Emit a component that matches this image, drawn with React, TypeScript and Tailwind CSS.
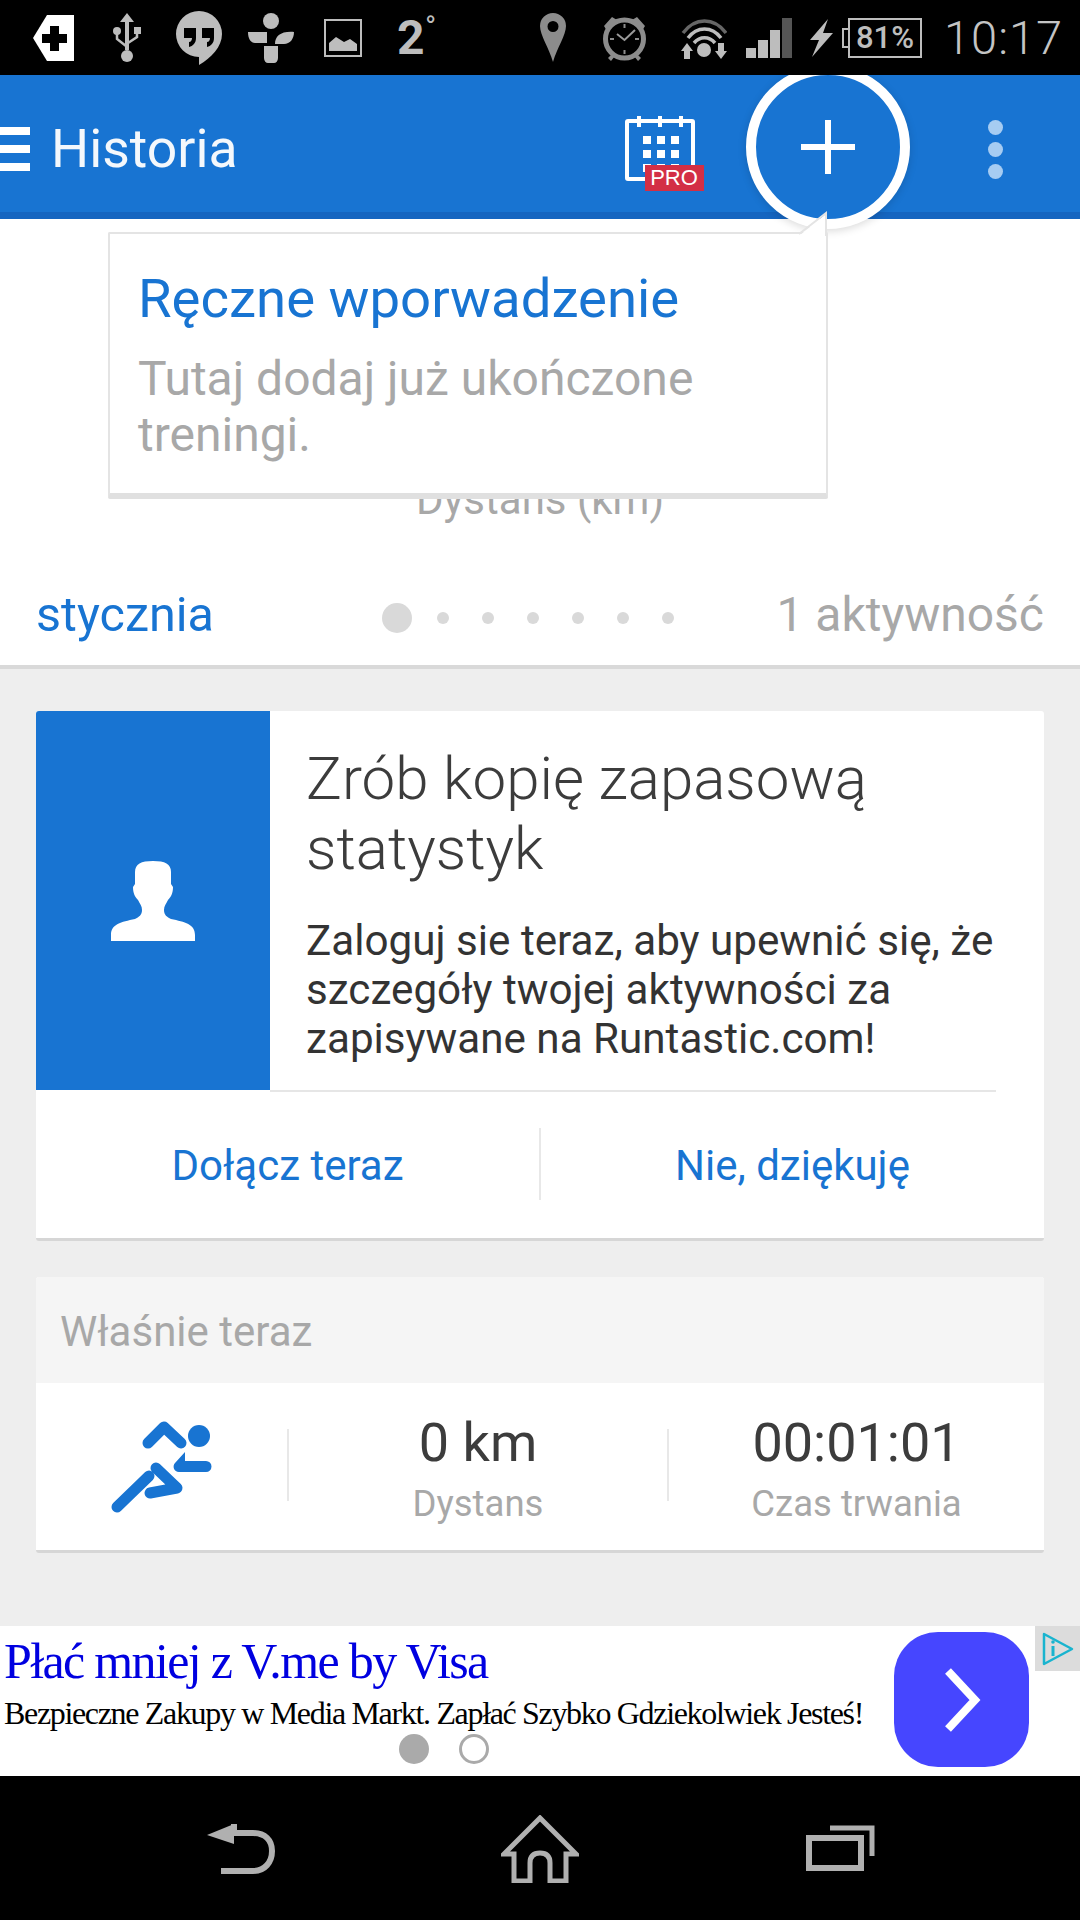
import React from "react";

const BLUE = "#1874d2";

function TagPlus() {
  return (
    <svg width="42" height="46" viewBox="0 0 42 46" className="shrink-0">
      <path d="M14 0H41V46H14L0 23Z" fill="#fff" />
      <path d="M17 11h9v8h8v9h-8v8h-9v-8H9v-9h8z" fill="#000" />
    </svg>
  );
}
function Usb() {
  return (
    <svg width="30" height="50" viewBox="0 0 30 50" className="shrink-0">
      <path d="M15 0l7 9h-5v28h-4V9H8z" fill="#bdbdbd" />
      <circle cx="15" cy="43" r="6" fill="#bdbdbd" />
      <circle cx="5" cy="18" r="4" fill="#bdbdbd" />
      <rect x="22" y="14" width="7" height="7" fill="#bdbdbd" />
      <path d="M5 20v6l9 7M25 20v4l-9 6" fill="none" stroke="#bdbdbd" strokeWidth="2.5" />
    </svg>
  );
}
function Hangouts() {
  return (
    <svg width="48" height="54" viewBox="0 0 48 54" className="shrink-0">
      <path d="M24 0a23 23 0 0 1 23 23c0 13-11 24-23 31V46A23 23 0 0 1 24 0z" fill="#bdbdbd" />
      <path d="M9 17h12v10c0 5-3 8-7 9v-5c2 0 3-2 3-4H9zM27 17h12v10c0 5-3 8-7 9v-5c2 0 3-2 3-4h-8z" fill="#000" />
    </svg>
  );
}
function Tune() {
  return (
    <svg width="46" height="50" viewBox="0 0 46 50" className="shrink-0">
      <circle cx="23" cy="8" r="8" fill="#bdbdbd" />
      <path d="M0 19h19v11H7c-4 0-7-4-7-11zM27 31c0-8 6-13 19-12 0 7-4 12-10 12zM16 33h14v12c0 3-2 5-4 5h-6c-2 0-4-2-4-5z" fill="#bdbdbd" />
    </svg>
  );
}
function Pic() {
  return (
    <svg width="38" height="38" viewBox="0 0 38 38" className="shrink-0">
      <rect x="1" y="1" width="36" height="36" fill="none" stroke="#bdbdbd" strokeWidth="2" />
      <path d="M5 32V24l7-6 8 5 6-3 7 5v7z" fill="#bdbdbd" />
    </svg>
  );
}
function Pin() {
  return (
    <svg width="26" height="49" viewBox="0 0 26 49" className="shrink-0">
      <path fillRule="evenodd" d="M13 0a13 13 0 0 1 13 13c0 9-9 22-13 36C9 35 0 22 0 13A13 13 0 0 1 13 0zm0 8a5.500 5.500 0 1 0 0 11 5.500 5.500 0 0 0 0-11z" fill="#8c8c8c" />
    </svg>
  );
}
function Alarm() {
  return (
    <svg width="47" height="48" viewBox="0 0 47 48" className="shrink-0">
      <circle cx="23.500" cy="25" r="19" fill="none" stroke="#8c8c8c" strokeWidth="5" />
      <path d="M3 12l8-9 5 3-10 11zM44 12l-8-9-5 3 10 11zM7 44l4-4 3 2-4 5zM40 44l-4-4-3 2 4 5z" fill="#8c8c8c" />
      <path d="M16 20l7.500 6L34 16" fill="none" stroke="#9a9a9a" strokeWidth="2" />
      <path d="M23.500 10v4M23.500 36v4M9 25h4M34 25h4" stroke="#8c8c8c" strokeWidth="2" />
    </svg>
  );
}
function Wifi() {
  return (
    <svg width="46" height="42" viewBox="0 0 46 42" className="shrink-0">
      <path d="M2 16C14 0 33 0 45 16" fill="none" stroke="#666" strokeWidth="3.500" />
      <path d="M7 21C16 9 31 9 40 21M13 26c6-7 15-7 21 0" fill="none" stroke="#bdbdbd" strokeWidth="3.500" />
      <circle cx="23" cy="33" r="7" fill="#bdbdbd" />
      <path d="M6 26l6 8H9v8H3v-8H0zM40 42l6-8h-3v-8h-6v8h-3z" fill="#bdbdbd" />
    </svg>
  );
}
function Signal() {
  return (
    <svg width="46" height="40" viewBox="0 0 46 40" className="shrink-0">
      <rect x="0" y="30" width="10" height="10" fill="#bdbdbd" />
      <rect x="12" y="22" width="10" height="18" fill="#bdbdbd" />
      <rect x="24" y="12" width="10" height="28" fill="#bdbdbd" />
      <rect x="36" y="0" width="10" height="40" fill="#555" />
    </svg>
  );
}
function Bolt() {
  return (
    <svg width="23" height="38" viewBox="0 0 23 38" className="shrink-0">
      <path d="M18 0L0 21h9L2 38 23 14h-10z" fill="#bdbdbd" />
    </svg>
  );
}
function Calendar() {
  const cells = [0, 1, 2];
  return (
    <div className="relative w-[79px] h-[75px] shrink-0">
      <div className="absolute left-0 top-[3px] w-[70px] h-[62px] border-[4px] border-white rounded-[3px]" />
      {[12, 33, 54].map((x) => (
        <div key={x} className="absolute top-0 w-[4px] h-[11px] bg-white" style={{ left: x }} />
      ))}
      <div className="absolute left-[18px] top-[20px] grid grid-cols-3 gap-x-[6px] gap-y-[6px]">
        {cells.concat(cells, cells).map((c, i) => (
          <div key={i} className="w-[8px] h-[8px] bg-white" />
        ))}
      </div>
      <div className="absolute left-[20px] top-[49px] w-[59px] h-[26px] bg-[#d32f45] flex items-center justify-center text-white text-[22px] leading-none font-[Liberation_Sans,sans-serif]">
        PRO
      </div>
    </div>
  );
}
function Runner() {
  return (
    <svg width="120" height="110" viewBox="100 1410 120 110" className="shrink-0 -ml-[6px] -mt-[4px]">
      <circle cx="200" cy="1436" r="11" fill={BLUE} />
      <path d="M149 1443l16-16 17 16" fill="none" stroke={BLUE} strokeWidth="11" strokeLinecap="round" strokeLinejoin="round" />
      <path d="M186 1452v9h21a5.500 5.500 0 0 1 0 11h-27c-5 0-7-6-4-9z" fill={BLUE} />
      <path d="M157 1468l21 20-27 5" fill="none" stroke={BLUE} strokeWidth="11" strokeLinecap="round" strokeLinejoin="round" />
      <path d="M150 1476l-32 31" fill="none" stroke={BLUE} strokeWidth="11" strokeLinecap="round" />
    </svg>
  );
}
function Person() {
  return (
    <svg width="84" height="81" viewBox="0 0 84 81" className="shrink-0">
      <path d="M24 12C24 4 30 1 42 1C54 1 60 4 60 12V24L62 27C62 33 60 37 57 40C55 44 53 46 53 50C53 55 56 57 60 59C74 62 84 64 84 75V81H0V75C0 64 10 62 24 59C28 57 31 55 31 50C31 46 29 44 27 40C24 37 22 33 22 27L24 24Z" fill="#fff" />
    </svg>
  );
}
function Back() {
  return (
    <svg width="68" height="50" viewBox="0 0 68 50" className="shrink-0">
      <path d="M27 0v9h19c12 0 19 7 19 18s-7 20-19 20H14" fill="none" stroke="#b0b0b0" strokeWidth="6" />
      <path d="M27 0L0 11l27 9z" fill="#b0b0b0" />
    </svg>
  );
}
function Home() {
  return (
    <svg width="78" height="68" viewBox="0 0 78 68" className="shrink-0">
      <path d="M39 3L3 39h10v27h16V48c0-7 4-10 10-10s10 3 10 10v18h16V39h10z" fill="none" stroke="#b0b0b0" strokeWidth="5" strokeLinejoin="miter" />
    </svg>
  );
}
function Recents() {
  return (
    <svg width="69" height="46" viewBox="0 0 69 46" className="shrink-0">
      <rect x="3" y="13" width="52" height="30" fill="none" stroke="#b0b0b0" strokeWidth="6" />
      <path d="M24 3h42v28" fill="none" stroke="#b0b0b0" strokeWidth="5" />
    </svg>
  );
}

export default function App() {
  return (
    <div className="relative w-[1080px] h-[1920px] overflow-hidden flex flex-col bg-[#eeeeee] font-[Roboto,sans-serif]">
      {/* status bar */}
      <div className="relative z-20 h-[75px] shrink-0 bg-black flex items-center text-[#bdbdbd]">
        <div className="ml-[33px]"><TagPlus /></div>
        <div className="ml-[37px]"><Usb /></div>
        <div className="ml-[33px]"><Hangouts /></div>
        <div className="ml-[25px]"><Tune /></div>
        <div className="ml-[30px]"><Pic /></div>
        <div className="ml-[35px] w-[42px] text-[48px] leading-none font-bold relative">
          2<span className="absolute left-[28px] top-[-2px] text-[30px] font-normal">°</span>
        </div>
        <div className="ml-[101px]"><Pin /></div>
        <div className="ml-[35px]"><Alarm /></div>
        <div className="ml-[33px]"><Wifi /></div>
        <div className="ml-[19px]"><Signal /></div>
        <div className="ml-[18px]"><Bolt /></div>
        <div className="ml-[15px] relative w-[74px] h-[40px] shrink-0 border-[2px] border-[#bdbdbd] flex items-center justify-center text-[31px] font-medium leading-none">
          <span>81%</span>
          <div className="absolute left-[-8px] top-[8px] w-[6px] h-[20px] border-[2px] border-r-0 border-[#bdbdbd]" />
        </div>
        <div className="ml-[22px] text-[47px] font-light leading-none text-[#c4c4c4] tracking-[1px]">10:17</div>
      </div>

      {/* app bar */}
      <div className="relative h-[144px] shrink-0 bg-[#1874d2] border-b-[7px] border-[#1565c0] flex items-center">
        <div className="flex flex-col gap-[10px] w-[30px] mt-[11px]">
          <div className="h-[8px] bg-white" />
          <div className="h-[8px] bg-white" />
          <div className="h-[8px] bg-white" />
        </div>
        <div className="ml-[21px] text-[53.5px] text-[#f4f8fc] leading-none mt-[11px]">Historia</div>
        <div className="ml-[387px] mt-[20px]"><Calendar /></div>
        <div className="ml-[284px] flex flex-col gap-[7px] mt-[11px]">
          <div className="w-[15px] h-[15px] rounded-full bg-[#a6ccf2]" />
          <div className="w-[15px] h-[15px] rounded-full bg-[#a6ccf2]" />
          <div className="w-[15px] h-[15px] rounded-full bg-[#a6ccf2]" />
        </div>
      </div>

      {/* chart section */}
      <div className="h-[450px] shrink-0 bg-white border-b-[4px] border-[#d9d9d9] flex flex-col">
        <div className="mt-[261px] h-[40px] text-center text-[42px] leading-[40px] text-[#a8a8a8]">Dystans (km)</div>
        <div className="mt-[69px] pl-[36px] pr-[36px] flex items-center">
          <div className="text-[48.5px] leading-[52px] text-[#1874d2] w-[346px]">stycznia</div>
          <div className="flex items-center gap-[33px] mt-[6px]">
            <div className="w-[30px] h-[30px] rounded-full bg-[#d9d9d9] -mr-[8px]" />
            {[0, 1, 2, 3, 4, 5].map((i) => (
              <div key={i} className="w-[12px] h-[12px] rounded-full bg-[#d9d9d9]" />
            ))}
          </div>
          <div className="ml-auto text-[48px] leading-[52px] text-[#a8a8a8]">1 aktywność</div>
        </div>
      </div>

      {/* cards */}
      <div className="flex-1 px-[36px] pt-[42px] flex flex-col">
        <div className="h-[530px] shrink-0 bg-white rounded-[3px] border-b-[3px] border-[#d6d6d6] flex flex-col overflow-hidden">
          <div className="h-[379px] flex shrink-0">
            <div className="w-[234px] shrink-0 bg-[#1874d2] flex items-center justify-center">
              <Person />
            </div>
            <div className="flex-1 pl-[36px] h-[381px] border-b-[2px] border-[#e6e6e6] mr-[48px]">
              <div className="mt-[33px] text-[60px] leading-[70px] font-light text-[#3c3c3c] whitespace-nowrap">
                Zrób kopię zapasową<br />statystyk
              </div>
              <div className="mt-[32px] text-[42.2px] leading-[49px] text-[#333333] whitespace-nowrap">
                Zaloguj sie teraz, aby upewnić się, że<br />szczegóły twojej aktywności za<br />zapisywane na Runtastic.com!
              </div>
            </div>
          </div>
          <div className="flex-1 flex items-center text-[#1874d2] text-[42px] leading-none">
            <div className="w-[503px] text-center mt-[4px]">Dołącz teraz</div>
            <div className="w-[2px] h-[72px] bg-[#e8e8e8]" />
            <div className="flex-1 text-center mt-[4px]">Nie, dziękuję</div>
          </div>
        </div>

        <div className="mt-[36px] h-[276px] shrink-0 rounded-[3px] bg-white border-b-[3px] border-[#d6d6d6] flex flex-col overflow-hidden">
          <div className="h-[106px] shrink-0 bg-[#f5f5f5] flex items-center pl-[24px] pt-[4px] text-[42px] leading-none text-[#a8a8a8]">Właśnie teraz</div>
          <div className="flex-1 flex items-center">
            <div className="w-[251px] flex justify-center"><Runner /></div>
            <div className="w-[2px] h-[72px] bg-[#e8e8e8] -mt-[4px]" />
            <div className="w-[378px] text-center">
              <div className="text-[54px] leading-[62px] text-[#3c3c3c]">0 km</div>
              <div className="text-[36.5px] leading-[44px] text-[#a8a8a8] mt-[8px] -mb-[4px]">Dystans</div>
            </div>
            <div className="w-[2px] h-[72px] bg-[#e8e8e8] -mt-[4px]" />
            <div className="flex-1 text-center">
              <div className="text-[54px] leading-[62px] text-[#3c3c3c]">00:01:01</div>
              <div className="text-[36.5px] leading-[44px] text-[#a8a8a8] mt-[8px] -mb-[4px]">Czas trwania</div>
            </div>
          </div>
        </div>
      </div>

      {/* ad */}
      <div className="relative h-[150px] shrink-0 bg-white font-[Liberation_Serif,serif] flex">
        <div className="flex-1 pl-[4px]">
          <div className="mt-[8px] text-[50px] leading-[54px] tracking-[-1.65px] text-[#0000e0] whitespace-nowrap">Płać mniej z V.me by Visa</div>
          <div className="mt-[8px] text-[32px] leading-[34px] tracking-[-1.33px] text-black whitespace-nowrap">Bezpieczne Zakupy w Media Markt. Zapłać Szybko Gdziekolwiek Jesteś!</div>
          <div className="mt-[4px] ml-[395px] flex items-center gap-[30px]">
            <div className="w-[30px] h-[30px] rounded-full bg-[#aaaaaa]" />
            <div className="w-[30px] h-[30px] rounded-full border-[3px] border-[#aaaaaa]" />
          </div>
        </div>
        <div className="mt-[6px] mr-[51px] w-[135px] h-[135px] rounded-[44px] bg-[#4646ff] flex items-center justify-center">
          <svg width="40" height="64" viewBox="0 0 40 64">
            <path d="M6 3l27 29L6 61" fill="none" stroke="#fff" strokeWidth="8" />
          </svg>
        </div>
        <div className="absolute right-0 top-0 w-[45px] h-[45px] bg-[#dcdcdc] flex items-center justify-center">
          <svg width="34" height="34" viewBox="0 0 34 34">
            <path d="M3 2l28 15L3 32z" fill="none" stroke="#19b4cf" strokeWidth="2.500" strokeLinejoin="round" />
            <path d="M12 14v10" stroke="#19b4cf" strokeWidth="3" />
            <circle cx="12" cy="10" r="1.800" fill="#19b4cf" />
          </svg>
        </div>
      </div>

      {/* nav */}
      <div className="relative h-[144px] shrink-0 bg-black flex items-center">
        <div className="ml-[207px] mt-[1px]"><Back /></div>
        <div className="ml-[226px] mt-[2px]"><Home /></div>
        <div className="ml-[227px]"><Recents /></div>
      </div>

      {/* FAB */}
      <div className="absolute z-10 left-[746px] top-[65px] w-[164px] h-[164px] rounded-full bg-[#1874d2] border-[10px] border-white shadow-[0_2px_8px_rgba(0,0,0,0.15)] flex items-center justify-center">
        <svg width="54" height="54" viewBox="0 0 54 54">
          <path d="M24 0h6v24h24v6H30v24h-6V30H0v-6h24z" fill="#fff" />
        </svg>
      </div>

      {/* tooltip */}
      <div className="absolute z-10 left-[108px] top-[232px] w-[720px] h-[267px] bg-white border-[2px] border-[#e4e4e4] border-b-[6px] border-b-[#e0e0e0] rounded-[2px] pl-[28px] pt-[34px]">
        <div className="text-[54.5px] leading-[60px] text-[#1874d2] whitespace-nowrap">Ręczne wporwadzenie</div>
        <div className="mt-[23px] text-[48px] leading-[56px] text-[#a8a8a8]">
          Tutaj dodaj już ukończone<br />treningi.
        </div>
      </div>
      <svg className="absolute z-10 left-[795px] top-[210px]" width="44" height="26" viewBox="0 0 44 26">
        <path d="M4 26L32 3V26z" fill="#fff" />
        <path d="M4 24L31 3v23" fill="none" stroke="#e4e4e4" strokeWidth="2" />
      </svg>
    </div>
  );
}
